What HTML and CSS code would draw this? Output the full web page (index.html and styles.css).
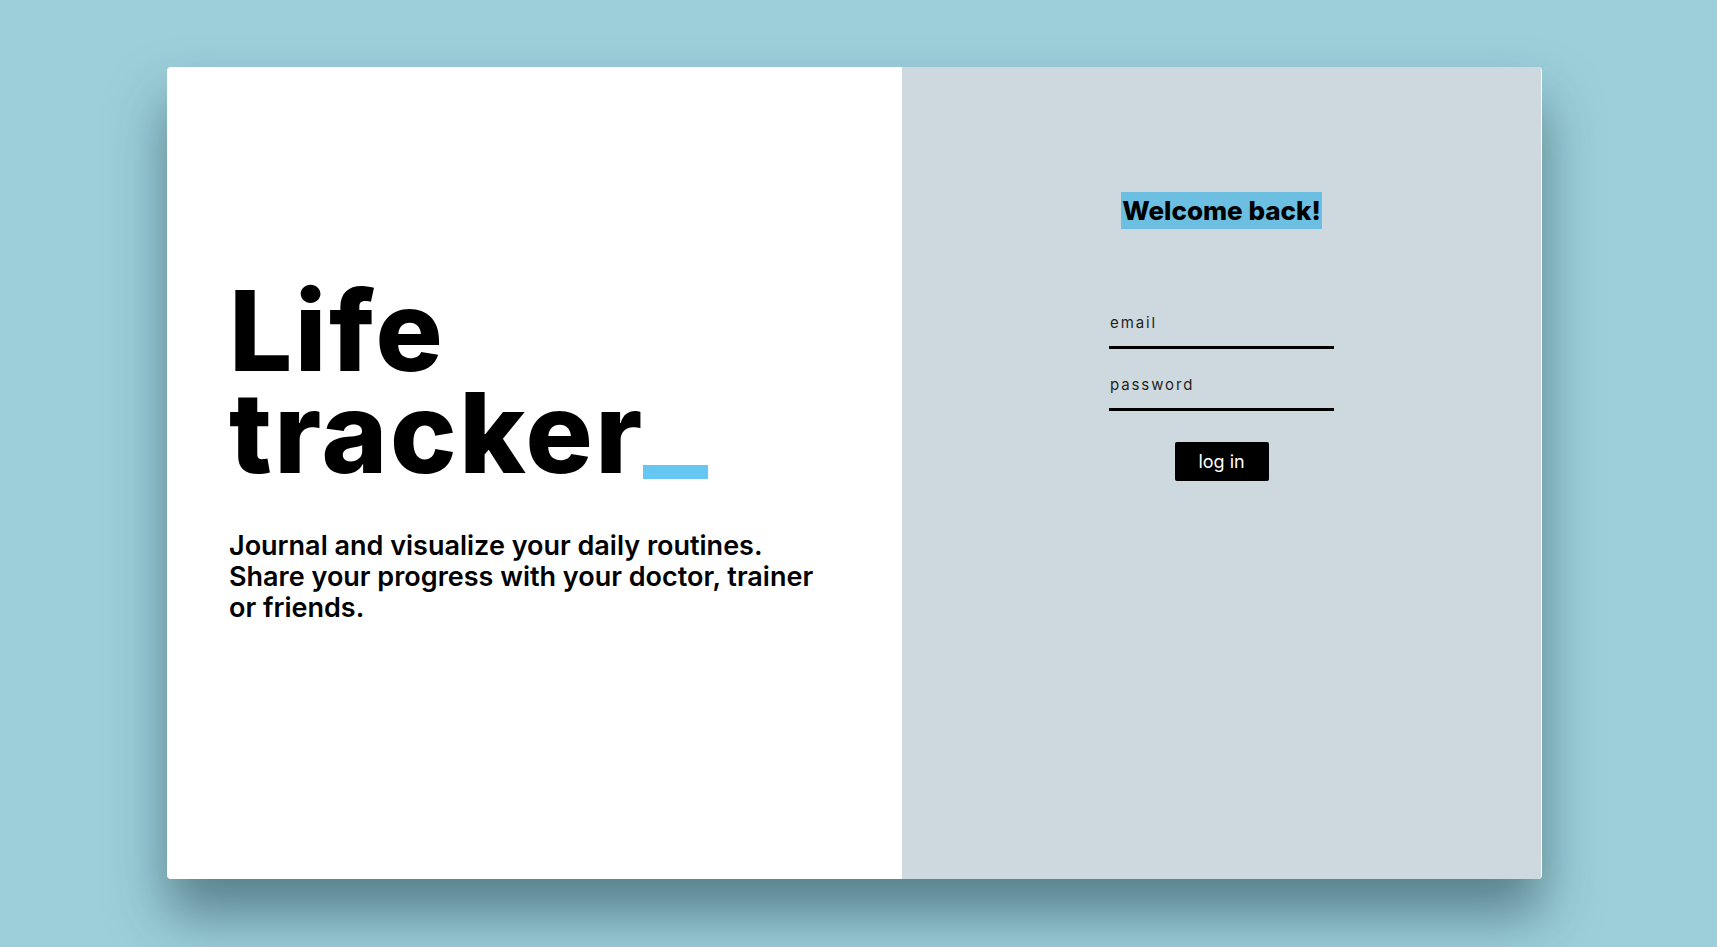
FILE: index.html
```html
<!DOCTYPE html>
<html lang="en">
<head>
<meta charset="utf-8">
<title>Life tracker</title>
<link rel="stylesheet" href="styles.css">
</head>
<body>
<main class="card">
  <section class="intro">
    <h1 class="title"><span class="line">Life</span><span class="line">tracker<span class="cursor"></span></span></h1>
    <p class="tagline">Journal and visualize your daily routines. Share your progress with your doctor, trainer or friends.</p>
  </section>
  <section class="login">
    <h2 class="welcome"><span class="mark">Welcome back!</span></h2>
    <form class="form">
      <input class="field" type="email" placeholder="email">
      <input class="field" type="password" placeholder="password">
      <button class="btn" type="button">log in</button>
    </form>
  </section>
</main>
</body>
</html>
```
FILE: styles.css
```css
html, body {
  margin: 0;
  padding: 0;
}
body {
  background: #9ccfda;
  height: 947px;
  overflow: hidden;
  font-family: "Inter", "Lato", sans-serif;
}
.card {
  display: flex;
  width: 1375px;
  height: 812px;
  margin: 67px 0 0 167px;
  background: #fff;
  border-radius: 4px;
  box-shadow: 0 35px 55px rgba(20, 50, 60, 0.5);
}
.intro {
  width: 735px;
  box-sizing: border-box;
  padding: 212px 0 0 62px;
}
.title {
  margin: 0;
  font-family: "Inter", sans-serif;
  font-weight: 800;
  font-size: 112px;
  line-height: 102px;
  letter-spacing: 2.5px;
  color: #000;
}
.line {
  display: block;
  height: 102px;
}
.cursor {
  display: inline-block;
  width: 65px;
  height: 14px;
  margin-left: -2px;
  background: #66c8f2;
  vertical-align: -6px;
}
.tagline {
  margin: 47px 0 0;
  width: 605px;
  font-family: "Inter", sans-serif;
  font-weight: 600;
  font-size: 27px;
  line-height: 31px;
  color: #000;
}
.login {
  flex: 1;
  display: flex;
  flex-direction: column;
  align-items: center;
  background: #cdd9de;
  border-radius: 0 3px 3px 0;
  margin-right: 1px;
}
.welcome {
  margin: 125px 0 0;
  font-family: "Inter", sans-serif;
  font-weight: 800;
  font-size: 26px;
  line-height: 37px;
}
.mark {
  display: inline-block;
  background: #6cbfe0;
  padding: 0 1px;
}
.form {
  display: flex;
  flex-direction: column;
  align-items: center;
  margin-top: 76px;
}
.field {
  width: 225px;
  box-sizing: border-box;
  height: 44px;
  padding: 0 0 6px 1px;
  margin-bottom: 18px;
  border: none;
  border-bottom: 3px solid #000;
  background: transparent;
  font-family: "Inter", sans-serif;
  font-size: 15px;
  letter-spacing: 1.9px;
  outline: none;
}
.field::placeholder {
  color: #1f1f1f;
}
.btn {
  margin-top: 13px;
  width: 94px;
  height: 39px;
  border: none;
  border-radius: 2px;
  background: #000;
  color: #fff;
  font-family: "Inter", sans-serif;
  font-size: 18px;
  cursor: pointer;
}
```
